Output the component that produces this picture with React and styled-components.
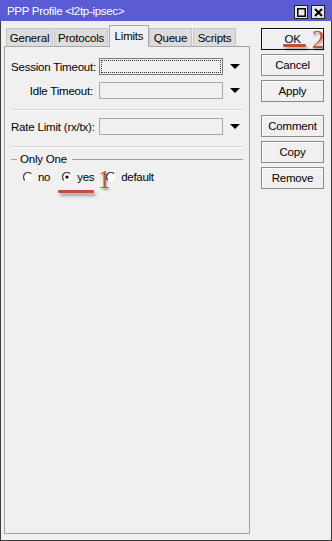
import React from "react"
import styled, { createGlobalStyle } from "styled-components"

const Global = createGlobalStyle`
	html, body {
		margin: 0;
		padding: 0;
		background: #f0f0f0;
	}
	* {
		box-sizing: border-box;
	}
`

const Window = styled.div`
	position: relative;
	width: 332px;
	height: 541px;
	display: flex;
	flex-direction: column;
	background: #f0f0f0;
	border: 1px solid #3c3c3c;
	border-top: none;
	font-family: "Liberation Sans", Arial, sans-serif;
	font-size: 11px;
	color: #000;
`

const TitleBar = styled.div`
	height: 21px;
	margin: 0 -1px;
	display: flex;
	align-items: center;
	padding: 0 7px 0 7px;
	background: #5b5bd4;
	color: #fff;
	font-size: 11.5px;
`

const TitleText = styled.span`
	flex: 1;
	letter-spacing: -0.3px;
	padding-top: 1px;
`

const TitleButton = styled.div`
	width: 14px;
	height: 14px;
	margin-left: 3px;
	margin-top: 3px;
	background: #e8e8e8;
	border: 1px solid #202020;
	display: flex;
	align-items: center;
	justify-content: center;
`

const Body = styled.div`
	flex: 1;
	display: flex;
	padding: 4px 0 6px 3px;
`

const LeftColumn = styled.div`
	width: 246px;
	display: flex;
	flex-direction: column;
`

const Tabs = styled.div`
	display: flex;
	align-items: flex-end;
	height: 22px;
	padding-left: 2px;
	position: relative;
	z-index: 1;
	margin-bottom: -1px;
`

const Tab = styled.div`
	width: ${(p) => p.w}px;
	height: ${(p) => (p.active ? 22 : 19)}px;
	margin-right: ${(p) => (p.active ? 0 : 1)}px;
	display: flex;
	align-items: center;
	justify-content: center;
	font-size: 11.5px;
	letter-spacing: -0.2px;
	background: ${(p) => (p.active ? "#f0f0f0" : "#dcdcdc")};
	border: 1px solid ${(p) => (p.active ? "#a8a8a8" : "#c4c4c4")};
	border-bottom: ${(p) => (p.active ? "none" : "1px solid #a8a8a8")};
	padding-bottom: ${(p) => (p.active ? 2 : 0)}px;
`

const Panel = styled.div`
	flex: 1;
	border: 1px solid #a0a0a0;
	padding: 11px 6px 0 6px;
	display: flex;
	flex-direction: column;
`

const FieldRow = styled.div`
	display: flex;
	align-items: center;
	height: 17px;
	margin-bottom: ${(p) => p.mb || 0}px;
`

const Label = styled.div`
	width: 82px;
	text-align: right;
	font-size: 11.5px;
	letter-spacing: -0.2px;
	white-space: nowrap;
`

const Input = styled.div`
	width: 124px;
	height: 17px;
	margin-left: 6px;
	border: 1px solid #a8a8a8;
	background: #f0f0f0;
	position: relative;
	${(p) =>
		p.focused &&
		`
		border-color: #7a7a7a;
		&::after {
			content: "";
			position: absolute;
			inset: 1px;
			border: 1px dotted #303030;
		}
	`}
`

const Arrow = styled.div`
	width: 0;
	height: 0;
	margin-left: 7px;
	border-left: 5px solid transparent;
	border-right: 5px solid transparent;
	border-top: 5px solid #000;
`

const Separator = styled.div`
	height: 1px;
	background: #d4d4d4;
	border-bottom: 1px solid #fff;
	box-sizing: content-box;
	margin: ${(p) => p.m};
`

const GroupTitle = styled.div`
	display: flex;
	align-items: center;
	font-size: 11.5px;
	letter-spacing: -0.2px;
	height: 14px;
	margin-top: 4px;
	&::before {
		content: "";
		width: 6px;
		height: 1px;
		background: #a0a0a0;
		margin-right: 3px;
	}
	&::after {
		content: "";
		flex: 1;
		height: 1px;
		background: #a0a0a0;
		margin-left: 5px;
	}
`

const RadioRow = styled.div`
	display: flex;
	align-items: center;
	height: 16px;
	margin-top: 3px;
	padding-left: 12px;
`

const RadioItem = styled.div`
	display: flex;
	align-items: center;
	font-size: 11.5px;
	letter-spacing: -0.3px;
	margin-right: ${(p) => p.mr}px;
	gap: 5px;
`

const RightColumn = styled.div`
	flex: 1;
	display: flex;
	flex-direction: column;
	padding: 3px 0 0 11px;
`

const Button = styled.div`
	width: 63px;
	height: 22px;
	display: flex;
	align-items: center;
	justify-content: center;
	font-size: 11.5px;
	letter-spacing: -0.2px;
	background: #f0f0f0;
	border: 1px solid ${(p) => (p.primary ? "#101010" : "#8a8a8a")};
	box-shadow: inset 1px 1px 0 #fff;
	margin-bottom: ${(p) => p.mb || 4}px;
`

const Mark = styled.div`
	position: absolute;
	left: ${(p) => p.x}px;
	top: ${(p) => p.y}px;
	font-family: "Liberation Serif", "Times New Roman", serif;
	font-size: 25px;
	line-height: 1;
	color: #c0503a;
	text-shadow: 1px 2px 2px rgba(0, 0, 0, 0.35);
`

const Underline = styled.div`
	position: absolute;
	left: ${(p) => p.x}px;
	top: ${(p) => p.y}px;
	width: ${(p) => p.w}px;
	height: 3px;
	background: #c0503a;
	border-radius: 1px;
	box-shadow: 2px 3px 3px rgba(0, 0, 0, 0.35);
`

function Radio({ checked }) {
	return (
		<svg width="10" height="10" viewBox="0 0 10 10">
			<circle cx="5" cy="5" r="4.5" fill="#fff" />
			<path d="M1.8 8.2 A4.5 4.5 0 0 1 8.2 1.8" stroke="#444" strokeWidth="1.3" fill="none" />
			{checked && <circle cx="5" cy="5" r="1.6" fill="#000" />}
		</svg>
	)
}

const tabs = [
	{ name: "General", w: 47 },
	{ name: "Protocols", w: 54 },
	{ name: "Limits", w: 40, active: true },
	{ name: "Queue", w: 43 },
	{ name: "Scripts", w: 43 },
]

const App = () => {
	return (
		<>
			<Global />
			<Window>
				<TitleBar>
					<TitleText>PPP Profile &lt;l2tp-ipsec&gt;</TitleText>
					<TitleButton>
						<svg width="9" height="9" viewBox="0 0 9 9">
							<rect x="0.75" y="0.75" width="7.5" height="7.5" fill="none" stroke="#000" strokeWidth="1.5" />
						</svg>
					</TitleButton>
					<TitleButton>
						<svg width="9" height="9" viewBox="0 0 9 9">
							<path d="M1 1 L8 8 M8 1 L1 8" stroke="#000" strokeWidth="2" />
						</svg>
					</TitleButton>
				</TitleBar>
				<Body>
					<LeftColumn>
						<Tabs>
							{tabs.map((t) => (
								<Tab key={t.name} w={t.w} active={t.active}>
									{t.name}
								</Tab>
							))}
						</Tabs>
						<Panel>
							<FieldRow mb={7}>
								<Label>Session Timeout:</Label>
								<Input focused />
								<Arrow />
							</FieldRow>
							<FieldRow>
								<Label>Idle Timeout:</Label>
								<Input />
								<Arrow />
							</FieldRow>
							<Separator m="10px 0 7px 0" />
							<FieldRow>
								<Label>Rate Limit (rx/tx):</Label>
								<Input />
								<Arrow />
							</FieldRow>
							<Separator m="11px 0 0 0" />
							<GroupTitle>Only One</GroupTitle>
							<RadioRow>
								<RadioItem mr={12}>
									<Radio />
									no
								</RadioItem>
								<RadioItem mr={12}>
									<Radio checked />
									yes
								</RadioItem>
								<RadioItem mr={0}>
									<Radio />
									default
								</RadioItem>
							</RadioRow>
						</Panel>
					</LeftColumn>
					<RightColumn>
						<Button primary>OK</Button>
						<Button>Cancel</Button>
						<Button mb={13}>Apply</Button>
						<Button>Comment</Button>
						<Button>Copy</Button>
						<Button>Remove</Button>
					</RightColumn>
				</Body>
				<Mark x={97} y={167}>1</Mark>
				<Underline x={57} y={190} w={36} />
				<Mark x={311} y={27}>2</Mark>
				<Underline x={282} y={44} w={23} />
			</Window>
		</>
	)
}

export default App
